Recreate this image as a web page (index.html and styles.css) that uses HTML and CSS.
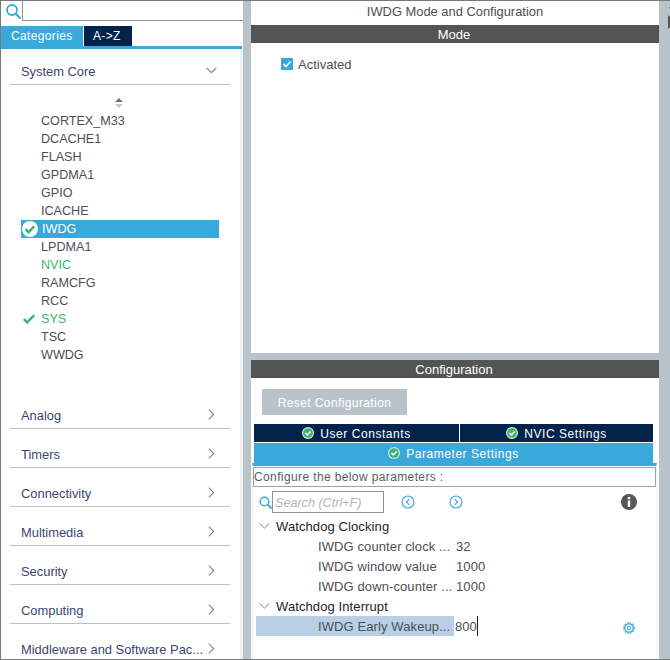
FILE: index.html
```html
<!DOCTYPE html>
<html lang="en">
<head>
<meta charset="utf-8">
<title>IWDG Mode and Configuration</title>
<link rel="stylesheet" href="styles.css">
</head>
<body>
<div class="app">
  <aside class="left">
    <div class="searchbar">
      <span class="searchicon"><svg width="15" height="15" viewBox="0 0 15 15"><circle cx="6" cy="6" r="5" fill="none" stroke="#39a9dc" stroke-width="1.8"/><path d="M9.8 9.8l4 4" stroke="#39a9dc" stroke-width="2.2" stroke-linecap="round"/></svg></span>
      <span class="searchinput"></span>
    </div>
    <div class="cattabs">
      <span class="cattab active">Categories</span>
      <span class="cattab">A-&gt;Z</span>
    </div>
    <div class="tree">
      <div class="group open"><span>System Core</span><svg class="chev" width="11" height="7" viewBox="0 0 11 7"><path d="M.6.8l4.9 4.9L10.400.8" fill="none" stroke="#7d8488" stroke-width="1.1"/></svg></div>
      <div class="sort"><svg width="10" height="12" viewBox="0 0 10 12"><path d="M5 1l4 4H1z" fill="#6d7275"/><path d="M1 7h8l-4 4z" fill="#c3c7c9"/></svg></div>
      <ul class="items">
        <li class="item">CORTEX_M33</li>
        <li class="item">DCACHE1</li>
        <li class="item">FLASH</li>
        <li class="item">GPDMA1</li>
        <li class="item">GPIO</li>
        <li class="item">ICACHE</li>
        <li class="item selected"><svg class="mark" width="16" height="16" viewBox="0 0 16 16"><circle cx="8" cy="8" r="8" fill="#fff"/><path d="M3.600 8.200l3 3 5.600-5.800" fill="none" stroke="#3cb371" stroke-width="2.400"/></svg>IWDG</li>
        <li class="item">LPDMA1</li>
        <li class="item green">NVIC</li>
        <li class="item">RAMCFG</li>
        <li class="item">RCC</li>
        <li class="item green"><svg class="mark" width="12" height="10" viewBox="0 0 12 10"><path d="M.8 5l3.400 3.400L11.200 1.200" fill="none" stroke="#3cb371" stroke-width="2.400"/></svg>SYS</li>
        <li class="item">TSC</li>
        <li class="item">WWDG</li>
      </ul>
      <div class="groups">
        <div class="group"><span>Analog</span><svg class="chev" width="7" height="11" viewBox="0 0 7 11"><path d="M.8.6l4.900 4.900L.8 10.400" fill="none" stroke="#7d8488" stroke-width="1.1"/></svg></div>
        <div class="group"><span>Timers</span><svg class="chev" width="7" height="11" viewBox="0 0 7 11"><path d="M.8.6l4.900 4.900L.8 10.400" fill="none" stroke="#7d8488" stroke-width="1.1"/></svg></div>
        <div class="group"><span>Connectivity</span><svg class="chev" width="7" height="11" viewBox="0 0 7 11"><path d="M.8.6l4.900 4.900L.8 10.400" fill="none" stroke="#7d8488" stroke-width="1.1"/></svg></div>
        <div class="group"><span>Multimedia</span><svg class="chev" width="7" height="11" viewBox="0 0 7 11"><path d="M.8.6l4.900 4.900L.8 10.400" fill="none" stroke="#7d8488" stroke-width="1.1"/></svg></div>
        <div class="group"><span>Security</span><svg class="chev" width="7" height="11" viewBox="0 0 7 11"><path d="M.8.6l4.900 4.900L.8 10.400" fill="none" stroke="#7d8488" stroke-width="1.1"/></svg></div>
        <div class="group"><span>Computing</span><svg class="chev" width="7" height="11" viewBox="0 0 7 11"><path d="M.8.6l4.900 4.900L.8 10.400" fill="none" stroke="#7d8488" stroke-width="1.1"/></svg></div>
        <div class="group last"><span>Middleware and Software Pac...</span><svg class="chev" width="7" height="11" viewBox="0 0 7 11"><path d="M.8.6l4.900 4.900L.8 10.400" fill="none" stroke="#7d8488" stroke-width="1.1"/></svg></div>
      </div>
    </div>
  </aside>
  <main class="right">
    <section class="modepanel">
      <h1 class="title">IWDG Mode and Configuration</h1>
      <div class="bar">Mode</div>
      <div class="activated"><span class="check"><svg width="12" height="12" viewBox="0 0 12 12"><path d="M2.500 6l2.500 2.500 4.500-5" fill="none" stroke="#fff" stroke-width="1.600"/></svg></span>Activated</div>
    </section>
    <section class="configpanel">
      <div class="bar">Configuration</div>
      <button class="reset">Reset Configuration</button>
      <div class="tabs">
        <div class="tab"><svg class="tick" width="12" height="12" viewBox="0 0 12 12"><circle cx="6" cy="6" r="6" fill="#cfe9da"/><circle cx="6" cy="6" r="4.800" fill="#3cb371"/><path d="M3.400 6l1.900 1.900L8.700 4.400" fill="none" stroke="#fff" stroke-width="1.500"/></svg><span class="tablabel">User Constants</span></div>
        <div class="tab"><svg class="tick" width="12" height="12" viewBox="0 0 12 12"><circle cx="6" cy="6" r="6" fill="#cfe9da"/><circle cx="6" cy="6" r="4.800" fill="#3cb371"/><path d="M3.400 6l1.900 1.900L8.700 4.400" fill="none" stroke="#fff" stroke-width="1.500"/></svg><span class="tablabel">NVIC Settings</span></div>
        <div class="tab wide"><svg class="tick" width="12" height="12" viewBox="0 0 12 12"><circle cx="6" cy="6" r="6" fill="#cfe9da"/><circle cx="6" cy="6" r="4.800" fill="#3cb371"/><path d="M3.400 6l1.900 1.900L8.700 4.400" fill="none" stroke="#fff" stroke-width="1.500"/></svg><span class="tablabel">Parameter Settings</span></div>
      </div>
      <div class="params">
        <div class="configure">Configure the below parameters :</div>
        <div class="toolbar">
          <svg class="ptool" width="13" height="13" viewBox="0 0 13 13"><circle cx="5.500" cy="5.500" r="4.300" fill="none" stroke="#39a9dc" stroke-width="1.500"/><path d="M8.700 8.700l3.300 3.300" stroke="#39a9dc" stroke-width="1.800" stroke-linecap="round"/></svg>
          <span class="psearch">Search (Ctrl+F)</span>
          <svg class="nav first" width="14" height="14" viewBox="0 0 14 14"><circle cx="7" cy="7" r="6" fill="none" stroke="#39a9dc" stroke-width="1.100"/><path d="M8.200 4.200L5.400 7l2.800 2.800" fill="none" stroke="#39a9dc" stroke-width="1.200"/></svg>
          <svg class="nav" width="14" height="14" viewBox="0 0 14 14"><circle cx="7" cy="7" r="6" fill="none" stroke="#39a9dc" stroke-width="1.100"/><path d="M5.800 4.200L8.600 7l-2.800 2.800" fill="none" stroke="#39a9dc" stroke-width="1.200"/></svg>
          <svg class="info" width="16" height="16" viewBox="0 0 16 16"><circle cx="8" cy="8" r="8" fill="#565958"/><rect x="6.800" y="3" width="2.400" height="2.300" fill="#fff"/><rect x="6.800" y="6.500" width="2.400" height="6.500" fill="#fff"/></svg>
        </div>
        <div class="ptree">
          <div class="phead"><svg width="11" height="6" viewBox="0 0 11 6"><path d="M.6.600L5.500 5l4.900-4.400" fill="none" stroke="#7d8488" stroke-width="1"/></svg>Watchdog Clocking</div>
          <div class="prow"><span class="pname">IWDG counter clock ...</span><span class="pval">32</span></div>
          <div class="prow"><span class="pname">IWDG window value</span><span class="pval">1000</span></div>
          <div class="prow"><span class="pname">IWDG down-counter ...</span><span class="pval">1000</span></div>
          <div class="phead"><svg width="11" height="6" viewBox="0 0 11 6"><path d="M.6.600L5.500 5l4.900-4.400" fill="none" stroke="#7d8488" stroke-width="1"/></svg>Watchdog Interrupt</div>
          <div class="prow editing"><span class="pname">IWDG Early Wakeup...</span><span class="pval edit">800</span>
            <svg class="gear" width="12" height="12" viewBox="0 0 12 12"><circle cx="6" cy="6" r="1.800" fill="none" stroke="#39a9dc"/><circle cx="6" cy="6" r="4.200" fill="none" stroke="#39a9dc" stroke-width="1.300"/><circle cx="6" cy="6" r="5.300" fill="none" stroke="#39a9dc" stroke-width="1.200" stroke-dasharray="1.600 1.175"/></svg>
          </div>
        </div>
      </div>
    </section>
  </main>
  <div class="edge">
    <svg class="arrow-left" width="7" height="9" viewBox="0 0 7 9"><path d="M6 0v9L1 4.500z" fill="#535554"/></svg>
    <svg class="arrow-right" width="8" height="14" viewBox="0 0 8 14"><path d="M0 0l7.500 7L0 14z" fill="#535554"/></svg>
  </div>
</div>
</body>
</html>
```
FILE: styles.css
```css
* { box-sizing: border-box; }
html, body { margin: 0; padding: 0; }
body { width: 670px; height: 660px; overflow: hidden; font-family: "Liberation Sans", Arial, sans-serif; font-size: 13px; color: #4b4f52; background: #fff; }
.app { display: flex; width: 670px; height: 660px; border-top: 1px solid #77797b; border-left: 1px solid #77797b; border-bottom: 1px solid #77797b; background: #b9c4ca; gap: 8px; }
.left { width: 242px; flex: none; background: #fff; display: flex; flex-direction: column; }
.searchbar { display: flex; height: 20px; background: #fff; flex: none; }
.searchicon { width: 21px; flex: none; padding: 3px 0 0 5px; line-height: 0; }
.searchinput { flex: 1; border-left: 1px solid #8f9497; border-bottom: 1px solid #8f9497; }
.cattabs { display: flex; gap: 1px; height: 23px; margin: 5px 1px 0 0; border-bottom: 3px solid #39a9dc; flex: none; }
.cattab { background: #03234b; color: #fff; height: 20px; line-height: 20px; font-size: 12px; letter-spacing: .35px; padding: 0 9px; width: 48px; }
.cattab.active { background: #39a9dc; width: 82px; padding-left: 10px; }
.tree { flex: 1; padding: 0 13px 0 9px; overflow: hidden; background: linear-gradient(to right, #fff 239px, #eef2f3 239px); }
.group { display: flex; align-items: center; justify-content: space-between; height: 39px; border-bottom: 1px solid #b9c4ca; padding: 13px 15px 0 11px; font-size: 12.9px; color: #3b4570; white-space: nowrap; }
.group.open { height: 36px; padding: 10px 13px 0 11px; }
.group .chev { margin-top: -3px; }
.group.last { border-bottom: 0; padding-top: 12px; }
.sort { height: 12px; margin: 12px 0 0 104px; line-height: 0; }
.items { list-style: none; margin: 3px 0 0; padding: 0; }
.item { position: relative; height: 18px; line-height: 18px; padding-left: 31px; font-size: 12.6px; }
.item.selected { background: #39a9dc; color: #fff; margin-left: 11px; width: 198px; padding-left: 21px; }
.item.green { color: #3cb371; }
.mark { position: absolute; left: 13px; top: 4px; }
.selected .mark { left: 1px; top: 1px; }
.groups { margin-top: 26px; }
.right { width: 408px; flex: none; display: flex; flex-direction: column; gap: 7px; }
.modepanel { height: 352px; flex: none; background: #fff; }
.title { margin: 0; height: 24px; line-height: 22px; text-align: center; font-weight: 400; font-size: 12.9px; color: #4b4f52; }
.bar { height: 18px; line-height: 19px; background: #535554; color: #fff; text-align: center; font-size: 13px; padding-right: 2px; }
.activated { display: flex; align-items: center; gap: 5px; margin: 13px 0 0 30px; height: 16px; }
.check { width: 12px; height: 12px; background: #39a9dc; line-height: 0; flex: none; }
.configpanel { flex: 1; background: #fff; display: flex; flex-direction: column; min-height: 0; }
.reset { align-self: flex-start; margin: 11px 0 0 11px; width: 145px; height: 26px; border: 0; background: #b9c4ca; color: #fff; font: 12px "Liberation Sans", Arial, sans-serif; letter-spacing: .4px; padding: 2px 0 0; }
.tabs { display: grid; grid-template-columns: 205px 193px; gap: 1px; margin: 9px 0 0 3px; width: 399px; }
.tab { height: 18px; background: #03234b; color: #fff; font-size: 12px; letter-spacing: .55px; display: flex; align-items: center; justify-content: center; gap: 6px; }
.tablabel { padding-top: 2px; }
.tab.wide { grid-column: 1 / span 2; background: #39a9dc; height: 20px; }
.tick { flex: none; }
.params { flex: 1; border: solid #eef2f3; border-width: 3px 1px 0; border-top-color: #39a9dc; margin-left: 1px; width: 405px; padding: 1px 0 0; display: flex; flex-direction: column; min-height: 0; }
.configure { height: 20px; line-height: 19px; border: 1px solid #9da2a5; padding-left: 0; color: #5a5e60; font-size: 12px; letter-spacing: .38px; flex: none; }
.toolbar { display: flex; align-items: center; height: 22px; padding-left: 6px; margin-top: 4px; flex: none; }
.psearch { width: 112px; height: 22px; line-height: 22px; border: 1px solid #8f9497; padding-left: 2px; color: #b3b6b8; font-style: italic; font-size: 12.6px; }
.nav.first { margin-left: 17px; }
.nav { margin-left: 34px; }
.info { margin-left: 158px; }
.ptree { margin-top: 3px; letter-spacing: .1px; }
.phead { display: flex; align-items: center; height: 20px; padding-left: 6px; gap: 6px; color: #1f2326; }
.prow { position: relative; height: 20px; line-height: 21px; padding-left: 65px; display: flex; }
.pname { width: 138px; flex: none; white-space: nowrap; }
.editing { background: linear-gradient(to right, #b8cfe6 198px, #fff 198px); margin-left: 3px; padding-left: 62px; }
.edit { border-right: 1px solid #222; margin-left: -1px; letter-spacing: 0; }
.gear { position: absolute; left: 367px; top: 6px; }
.edge { width: 9px; flex: none; border-right: 1px solid #77797b; display: flex; flex-direction: column; align-items: flex-start; }
.arrow-left { margin: 2px 0 0 1px; }
.arrow-right { margin: 3px 0 0 1px; }
```
